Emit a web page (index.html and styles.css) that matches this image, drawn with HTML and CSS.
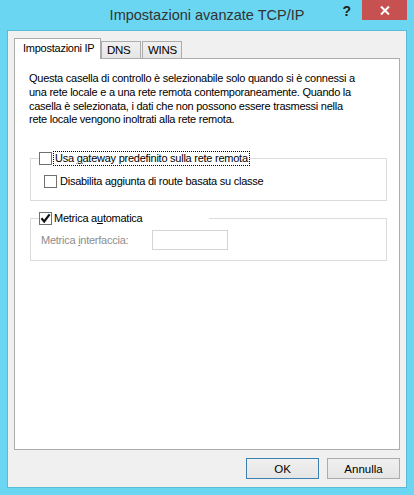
FILE: index.html
```html
<!DOCTYPE html>
<html>
<head>
    <title>Impostazioni avanzate TCP/IP</title>
    <meta name="viewport" content="width=device-width, initial-scale=1">
    <link rel="stylesheet" href="styles.css">
</head>
<body>
    <div class="window">
        <div class="titlebar">
            <div></div>
            <div class="title">Impostazioni avanzate TCP/IP</div>
            <div class="caption-buttons">
                <span class="help-btn">?</span>
                <span class="close-btn">
                    <svg width="10" height="9" viewBox="0 0 10 9">
                        <path d="M1 0.5 L9 8.5 M9 0.5 L1 8.5" stroke="#fff" stroke-width="2"/>
                    </svg>
                </span>
            </div>
        </div>
        <div class="client">
            <div class="tabs">
                <div class="tab active">Impostazioni IP</div>
                <div class="tab tab-dns">DNS</div>
                <div class="tab tab-wins">WINS</div>
            </div>
            <div class="tab-panel">
                <p class="info">
                    Questa casella di controllo è selezionabile solo quando si è connessi a<br>
                    una rete locale e a una rete remota contemporaneamente. Quando la<br>
                    casella è selezionata, i dati che non possono essere trasmessi nella<br>
                    rete locale vengono inoltrati alla rete remota.
                </p>

                <fieldset class="group group-gateway">
                    <legend class="group-legend">
                        <span class="checkbox"></span>
                        <span class="label focused">Usa <u>g</u>ateway predefinito sulla rete remota</span>
                    </legend>
                    <div class="check-row">
                        <span class="checkbox"></span>
                        <span class="label">Disabilita aggiunta di route basata su classe</span>
                    </div>
                </fieldset>

                <fieldset class="group group-metric">
                    <legend class="group-legend metric-legend">
                        <span class="checkbox checked">
                            <svg width="11" height="11" viewBox="0 0 11 11">
                                <path d="M1.5 5.3 L4.2 8.4 L9.6 1.4" fill="none" stroke="#111" stroke-width="2.2"/>
                            </svg>
                        </span>
                        <span class="label">Metrica a<u>u</u>tomatica</span>
                    </legend>
                    <div class="metric-row">
                        <span class="metric-label">Metrica <u>i</u>nterfaccia:</span>
                        <span class="metric-input"></span>
                    </div>
                </fieldset>
            </div>
            <div class="buttons">
                <button class="btn default">OK</button>
                <button class="btn">Annulla</button>
            </div>
        </div>
    </div>
</body>
</html>
```

FILE: styles.css
```css
html, body {
    margin: 0;
    padding: 0;
}
body {
    width: 414px;
    height: 495px;
    background: #6bd6f1;
    font-family: 'Liberation Sans', Arial, sans-serif;
    font-size: 11px;
    letter-spacing: -0.25px;
    color: #000;
    overflow: hidden;
}
.window {
    height: 100%;
    display: flex;
    flex-direction: column;
}
.titlebar {
    height: 30px;
    display: grid;
    grid-template-columns: 1fr auto 1fr;
}
.title {
    font-size: 14.5px;
    letter-spacing: 0;
    color: #333;
    padding-top: 7px;
}
.caption-buttons {
    display: flex;
    justify-content: flex-end;
    align-items: flex-start;
    padding-right: 7px;
}
.help-btn {
    font-weight: bold;
    font-size: 14px;
    letter-spacing: 0;
    color: #222;
    margin: 3px 11px 0 0;
}
.close-btn {
    width: 45px;
    height: 20px;
    background: #c75050;
    display: flex;
    align-items: center;
    justify-content: center;
}
.client {
    flex: 1;
    margin: 0 7px 7px 7px;
    border: 1px solid #58bcd8;
    background: #f0f0f0;
    display: flex;
    flex-direction: column;
    padding: 7px 6px 8px 6px;
}
.tabs {
    display: flex;
    align-items: flex-start;
    height: 20px;
}
.tab {
    box-sizing: border-box;
    height: 17px;
    margin-top: 3px;
    width: 40px;
    padding-left: 5px;
    border: 1px solid #acacac;
    border-bottom: none;
    background: linear-gradient(#f0f0f0, #e5e5e5);
    line-height: 16px;
    font-size: 11.5px;
}
.tab.active {
    width: 87px;
    height: 21px;
    margin-top: 0;
    padding-left: 8px;
    background: #fff;
    line-height: 19px;
    font-size: 11px;
    position: relative;
    z-index: 1;
}
.tab-wins {
    margin-left: 1px;
}
.tab-panel {
    height: 392px;
    flex: none;
    background: #fff;
    border: 1px solid #acacac;
    padding: 13px 12px 0 14px;
    box-sizing: border-box;
}
.info {
    margin: 0;
    line-height: 13.8px;
}
.group {
    border: 1px solid #dcdcdc;
    margin: 0 0 0 1px;
    width: 357px;
    box-sizing: border-box;
    padding: 0;
    min-width: 0;
}
.group-gateway {
    margin-top: 25px;
    padding: 0 0 12px 13px;
}
.group-metric {
    margin-top: 11px;
    padding: 0 0 10px 10px;
}
.group-legend {
    padding: 0;
    margin-left: 8px;
    display: flex;
    align-items: center;
    height: 13px;
}
.metric-legend {
    width: 170px;
}
.group-gateway .group-legend {
    margin-left: -5px;
}
.group-metric .group-legend {
    margin-left: -2px;
}
.checkbox {
    box-sizing: border-box;
    width: 13px;
    height: 13px;
    border: 1px solid #707070;
    background: #fff;
    display: inline-flex;
    align-items: center;
    justify-content: center;
    flex-shrink: 0;
}
.label {
    margin-left: 2px;
    line-height: 13px;
}
.focused {
    outline: 1px dotted #000;
    outline-offset: 0;
    padding: 0 1px;
    margin-left: 2px;
}
.check-row {
    display: flex;
    align-items: center;
    margin-top: 10px;
}
.check-row .label {
    margin-left: 3px;
}
.metric-row {
    display: flex;
    align-items: center;
    margin-top: 5px;
}
.metric-label {
    color: #8d8d8d;
    width: 111px;
}
.metric-input {
    box-sizing: border-box;
    width: 76px;
    height: 20px;
    border: 1px solid #d5d5d5;
    background: #fff;
}
.buttons {
    display: flex;
    justify-content: flex-end;
    gap: 8px;
    margin-top: 8px;
}
.btn {
    width: 73px;
    height: 21px;
    font-family: inherit;
    font-size: 11.5px;
    letter-spacing: 0;
    color: #000;
    background: linear-gradient(#f0f0f0, #e5e5e5);
    border: 1px solid #acacac;
    padding: 0;
}
.btn.default {
    border-color: #3c7fb1;
}
```
